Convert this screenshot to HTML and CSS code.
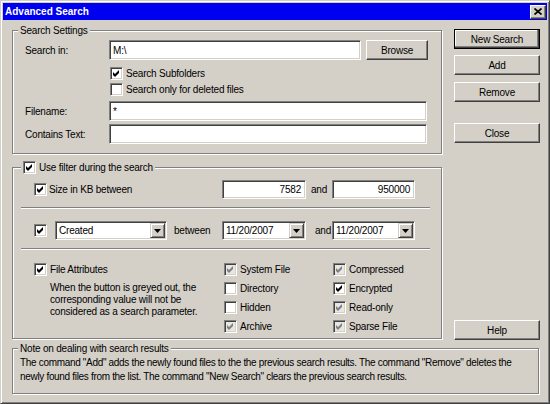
FILE: index.html
```html
<!DOCTYPE html>
<html lang="en">
<head>
    <meta charset="UTF-8">
    <meta name="viewport" content="width=device-width, initial-scale=1.0">
    <title>Advanced Search</title>
    <link rel="stylesheet" href="styles.css">
</head>
<body>
    <div class="window">
        <div class="titlebar">
            <span class="title">Advanced Search</span>
            <span class="close-x">
                <svg width="8" height="7" viewBox="0 0 8 7"><path d="M0.5 0.5L7.5 6.5M7.5 0.5L0.5 6.5" stroke="#000" stroke-width="1.7"/></svg>
            </span>
        </div>

        <div class="main">
            <div class="top">
                <div class="groups">
                    <!-- Search Settings -->
                    <div class="group">
                        <div class="legend">Search Settings</div>
                        <div class="settings-body">
                            <div class="field">
                                <span class="label">Search in:</span>
                                <div class="edit path">M:\</div>
                                <div class="btn browse">Browse</div>
                            </div>
                            <div class="opt">
                                <span class="check"><svg width="11" height="11" viewBox="1 1 11 11"><path d="M3 5l2 2 4-4v3l-4 4-2-2z"/></svg></span>
                                <span>Search Subfolders</span>
                            </div>
                            <div class="opt">
                                <span class="check"></span>
                                <span>Search only for deleted files</span>
                            </div>
                            <div class="field gap4">
                                <span class="label">Filename:</span>
                                <div class="edit wide">*</div>
                            </div>
                            <div class="field gap3">
                                <span class="label">Contains Text:</span>
                                <div class="edit wide"></div>
                            </div>
                        </div>
                    </div>

                    <!-- Filter -->
                    <div class="group filter">
                        <div class="legend with-check">
                            <span class="check"><svg width="11" height="11" viewBox="1 1 11 11"><path d="M3 5l2 2 4-4v3l-4 4-2-2z"/></svg></span>
                            <span>Use filter during the search</span>
                        </div>
                        <div class="filter-body">
                            <div class="size-row">
                                <div class="cl">
                                    <span class="check"><svg width="11" height="11" viewBox="1 1 11 11"><path d="M3 5l2 2 4-4v3l-4 4-2-2z"/></svg></span>
                                    <span>Size in KB between</span>
                                </div>
                                <div class="edit num">7582</div>
                                <span class="and">and</span>
                                <div class="edit num second">950000</div>
                            </div>
                        </div>
                        <div class="sep"></div>
                        <div class="filter-body">
                            <div class="date-row">
                                <span class="check"><svg width="11" height="11" viewBox="1 1 11 11"><path d="M3 5l2 2 4-4v3l-4 4-2-2z"/></svg></span>
                                <div class="combo kind">
                                    <span>Created</span>
                                    <span class="arrow"><svg width="7" height="4" viewBox="0 0 7 4"><path d="M0 0h7L3.5 4z"/></svg></span>
                                </div>
                                <span class="between">between</span>
                                <div class="combo date">
                                    <span>11/20/2007</span>
                                    <span class="arrow"><svg width="7" height="4" viewBox="0 0 7 4"><path d="M0 0h7L3.5 4z"/></svg></span>
                                </div>
                                <span class="and late">and</span>
                                <div class="combo date second">
                                    <span>11/20/2007</span>
                                    <span class="arrow"><svg width="7" height="4" viewBox="0 0 7 4"><path d="M0 0h7L3.5 4z"/></svg></span>
                                </div>
                            </div>
                        </div>
                        <div class="sep"></div>
                        <div class="filter-body">
                            <div class="attrs">
                                <div class="attr-info">
                                    <div class="attr">
                                        <span class="check"><svg width="11" height="11" viewBox="1 1 11 11"><path d="M3 5l2 2 4-4v3l-4 4-2-2z"/></svg></span>
                                        <span>File Attributes</span>
                                    </div>
                                    <p class="hint">When the button is greyed out, the<br>corresponding value will not be<br>considered as a search parameter.</p>
                                </div>
                                <div class="attr-col first">
                                    <div class="attr"><span class="check grey"><svg width="11" height="11" viewBox="1 1 11 11"><path d="M3 5l2 2 4-4v3l-4 4-2-2z"/></svg></span><span>System File</span></div>
                                    <div class="attr"><span class="check"></span><span>Directory</span></div>
                                    <div class="attr"><span class="check"></span><span>Hidden</span></div>
                                    <div class="attr"><span class="check grey"><svg width="11" height="11" viewBox="1 1 11 11"><path d="M3 5l2 2 4-4v3l-4 4-2-2z"/></svg></span><span>Archive</span></div>
                                </div>
                                <div class="attr-col">
                                    <div class="attr"><span class="check grey"><svg width="11" height="11" viewBox="1 1 11 11"><path d="M3 5l2 2 4-4v3l-4 4-2-2z"/></svg></span><span>Compressed</span></div>
                                    <div class="attr"><span class="check"><svg width="11" height="11" viewBox="1 1 11 11"><path d="M3 5l2 2 4-4v3l-4 4-2-2z"/></svg></span><span>Encrypted</span></div>
                                    <div class="attr"><span class="check grey"><svg width="11" height="11" viewBox="1 1 11 11"><path d="M3 5l2 2 4-4v3l-4 4-2-2z"/></svg></span><span>Read-only</span></div>
                                    <div class="attr"><span class="check grey"><svg width="11" height="11" viewBox="1 1 11 11"><path d="M3 5l2 2 4-4v3l-4 4-2-2z"/></svg></span><span>Sparse File</span></div>
                                </div>
                            </div>
                        </div>
                    </div>
                </div>

                <div class="buttons">
                    <div class="btn default">New Search</div>
                    <div class="btn add">Add</div>
                    <div class="btn remove">Remove</div>
                    <div class="btn close">Close</div>
                    <div class="btn help">Help</div>
                </div>
            </div>

            <!-- Note -->
            <div class="group note">
                <div class="legend">Note on dealing with search results</div>
                <p class="note-text">The command "Add" adds the newly found files to the the previous search results. The command "Remove" deletes the<br>newly found files from the list. The command "New Search" clears the previous search results.</p>
            </div>
        </div>
    </div>
</body>
</html>
```

FILE: styles.css
```css
body {
    margin: 0;
    background-color: #d4d0c8;
    font-family: "Liberation Sans", Arial, sans-serif;
    font-size: 10px;
    letter-spacing: -0.2px;
    color: #000;
}

.window {
    width: 550px;
    height: 404px;
    box-sizing: border-box;
    border: 1px solid;
    border-color: #d4d0c8 #404040 #404040 #d4d0c8;
    box-shadow: inset 1px 1px #fff, inset -1px -1px #808080;
    padding: 2px;
}

.titlebar {
    height: 17px;
    background-color: #0000f0;
    display: flex;
    align-items: center;
    justify-content: space-between;
    padding: 0 1px 0 2px;
}

.title {
    color: #fff;
    font-weight: bold;
    letter-spacing: 0;
}

.close-x {
    width: 16px;
    height: 14px;
    box-sizing: border-box;
    background-color: #d4d0c8;
    border: 1px solid;
    border-color: #fff #404040 #404040 #fff;
    box-shadow: inset -1px -1px #808080;
    display: flex;
    justify-content: center;
    align-items: center;
}

.main {
    padding: 9px 7px 0 9px;
}

.top {
    display: flex;
}

.groups {
    width: 430px;
    padding: 1px 0;
}

/* group boxes (etched frame) */
.group {
    border: 1px solid #808080;
    box-shadow: inset 1px 1px #fff, 1px 1px #fff;
}

.legend {
    margin: -7px 0 0 5px;
    padding: 0 2px;
    line-height: 13px;
    background-color: #d4d0c8;
    width: max-content;
}

.legend.with-check {
    margin-left: 8px;
    display: flex;
    align-items: center;
    gap: 3px;
}

.settings-body {
    padding: 3px 0 9px 12px;
}

.field {
    display: flex;
    align-items: center;
    height: 20px;
}

.field.gap4 { margin-top: 4px; }
.field.gap3 { margin-top: 3px; }

.label {
    width: 84px;
}

.opt {
    display: flex;
    align-items: center;
    gap: 3px;
    height: 16px;
    padding-left: 85px;
}

.field + .opt {
    margin-top: 5px;
}

.edit {
    box-sizing: border-box;
    height: 20px;
    background-color: #fff;
    border: 1px solid;
    border-color: #808080 #fff #fff #808080;
    box-shadow: inset 1px 1px #404040, inset -1px -1px #d4d0c8;
    padding: 0 3px;
    display: flex;
    align-items: center;
}

.edit.path { width: 252px; }
.edit.wide { width: 318px; }

.edit.num {
    width: 84px;
    height: 19px;
    justify-content: flex-end;
    padding-right: 4px;
}

.edit.num.second { width: 83px; }

.btn {
    box-sizing: border-box;
    height: 20px;
    background-color: #d4d0c8;
    border: 1px solid;
    border-color: #fff #404040 #404040 #fff;
    box-shadow: inset -1px -1px #808080;
    display: flex;
    justify-content: center;
    align-items: center;
}

.btn.browse {
    width: 62px;
    margin-left: 5px;
}

.btn.default {
    border: 1px solid #000;
    box-shadow: inset -1px -1px #404040, inset -2px -2px #808080, inset 1px 1px #fff;
}

.buttons {
    width: 86px;
    margin-left: 12px;
    display: flex;
    flex-direction: column;
}

.btn.add { margin-top: 6px; }
.btn.remove { margin-top: 7px; }
.btn.close { margin-top: 21px; }
.btn.help { margin-top: auto; }

/* checkboxes */
.check {
    flex: none;
    width: 13px;
    height: 13px;
    box-sizing: border-box;
    background-color: #fff;
    border: 1px solid;
    border-color: #808080 #fff #fff #808080;
    box-shadow: inset 1px 1px #404040, inset -1px -1px #d4d0c8;
    display: flex;
}

.check svg { fill: #000; }

.check.grey { background-color: #e9e7e3; }
.check.grey svg { fill: #808080; }

/* filter group */
.filter {
    margin-top: 13px;
}

.filter-body {
    padding-left: 21px;
}

.size-row {
    margin-top: 6px;
    height: 19px;
    display: flex;
    align-items: center;
}

.cl {
    width: 188px;
    display: flex;
    align-items: center;
    gap: 2px;
}

.and {
    width: 26px;
    box-sizing: border-box;
    padding-left: 5px;
}

.and.late { padding-left: 9px; }

.sep {
    margin: 8px 11px 0 8px;
    border-top: 1px solid #808080;
    border-bottom: 1px solid #fff;
}

.date-row {
    margin-top: 12px;
    height: 19px;
    display: flex;
    align-items: center;
}

.combo {
    box-sizing: border-box;
    height: 19px;
    background-color: #fff;
    border: 1px solid;
    border-color: #808080 #fff #fff #808080;
    box-shadow: inset 1px 1px #404040, inset -1px -1px #d4d0c8;
    padding-left: 3px;
    display: flex;
    align-items: center;
    justify-content: space-between;
}

.combo.kind {
    width: 112px;
    margin-left: 8px;
}

.combo.date { width: 84px; }
.combo.date.second { width: 83px; }

.arrow {
    width: 15px;
    align-self: stretch;
    margin: 1px;
    box-sizing: border-box;
    background-color: #d4d0c8;
    border: 1px solid;
    border-color: #d4d0c8 #404040 #404040 #d4d0c8;
    box-shadow: inset 1px 1px #fff, inset -1px -1px #808080;
    display: flex;
    justify-content: center;
    align-items: center;
}

.between {
    width: 55px;
    box-sizing: border-box;
    padding-left: 7px;
}

.attrs {
    margin-top: 10px;
    padding-bottom: 2px;
    display: flex;
}

.attr-info { width: 190px; }
.attr-col.first { width: 109px; }

.attr {
    height: 19px;
    display: flex;
    align-items: center;
    gap: 3px;
}

.hint {
    margin: 3px 0 0 16px;
    line-height: 12px;
}

/* note group */
.note {
    margin: 8px 1px 0 0;
}

.note-text {
    margin: 0;
    padding: 1px 0 9px 7px;
    line-height: 14px;
    white-space: nowrap;
    letter-spacing: -0.32px;
}
```
